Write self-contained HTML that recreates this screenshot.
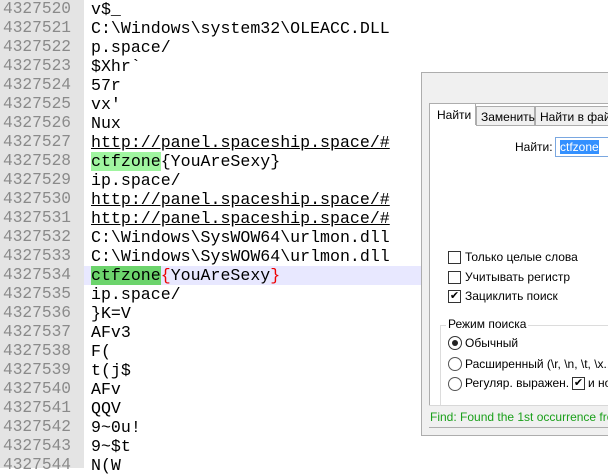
<!DOCTYPE html>
<html><head><meta charset="utf-8"><style>
*{margin:0;padding:0;box-sizing:border-box}
body{width:608px;height:468px;overflow:hidden;background:#fff;position:relative;font-family:"Liberation Mono",monospace}
#gut{position:absolute;left:0;top:0;width:84px;height:468px;background:#e4e4e4}
.r{position:absolute;left:0;height:19px;line-height:19px;font-size:16.6px;white-space:pre;width:608px}
.n{position:absolute;left:3px;color:#8a8a8a;font-size:16.2px}
.t{position:absolute;left:91px;color:#000}
.u{text-decoration:underline}
.g{background:#a0f5a0}
.gd{background:#6cd46c}
.red{color:#e00}
#dlg{position:absolute;left:421px;top:72px;width:200px;height:364px;background:#f0f0f0;border:1px solid #adadad;font-family:"Liberation Sans",sans-serif;font-size:12px;color:#000}
</style></head><body>
<div id="gut"></div>
<div class="r" style="top:266px;left:84px;background:#e8e8ff"></div>
<div class="r" style="top:0"><span class="n">4327520</span><span class="t">v$_</span></div>
<div class="r" style="top:19px"><span class="n">4327521</span><span class="t">C:\Windows\system32\OLEACC.DLL</span></div>
<div class="r" style="top:38px"><span class="n">4327522</span><span class="t">p.space/</span></div>
<div class="r" style="top:57px"><span class="n">4327523</span><span class="t">$Xhr`</span></div>
<div class="r" style="top:76px"><span class="n">4327524</span><span class="t">57r</span></div>
<div class="r" style="top:95px"><span class="n">4327525</span><span class="t">vx'</span></div>
<div class="r" style="top:114px"><span class="n">4327526</span><span class="t">Nux</span></div>
<div class="r" style="top:133px"><span class="n">4327527</span><span class="t u">http://panel.spaceship.space/#</span></div>
<div class="r" style="top:152px"><span class="n">4327528</span><span class="t"><span class="g">ctfzone</span>{YouAreSexy}</span></div>
<div class="r" style="top:171px"><span class="n">4327529</span><span class="t">ip.space/</span></div>
<div class="r" style="top:190px"><span class="n">4327530</span><span class="t u">http://panel.spaceship.space/#</span></div>
<div class="r" style="top:209px"><span class="n">4327531</span><span class="t u">http://panel.spaceship.space/#</span></div>
<div class="r" style="top:228px"><span class="n">4327532</span><span class="t">C:\Windows\SysWOW64\urlmon.dll</span></div>
<div class="r" style="top:247px"><span class="n">4327533</span><span class="t">C:\Windows\SysWOW64\urlmon.dll</span></div>
<div class="r" style="top:266px"><span class="n">4327534</span><span class="t"><span class="gd">ctfzone</span><span class="red">{</span>YouAreSexy<span class="red">}</span></span></div>
<div class="r" style="top:285px"><span class="n">4327535</span><span class="t">ip.space/</span></div>
<div class="r" style="top:304px"><span class="n">4327536</span><span class="t">}K=V</span></div>
<div class="r" style="top:323px"><span class="n">4327537</span><span class="t">AFv3</span></div>
<div class="r" style="top:342px"><span class="n">4327538</span><span class="t">F(</span></div>
<div class="r" style="top:361px"><span class="n">4327539</span><span class="t">t(j$</span></div>
<div class="r" style="top:380px"><span class="n">4327540</span><span class="t">AFv</span></div>
<div class="r" style="top:399px"><span class="n">4327541</span><span class="t">QQV</span></div>
<div class="r" style="top:418px"><span class="n">4327542</span><span class="t">9~0u!</span></div>
<div class="r" style="top:437px"><span class="n">4327543</span><span class="t">9~$t</span></div>
<div class="r" style="top:456px"><span class="n">4327544</span><span class="t">N(W</span></div>

<div id="dlg">
 <div style="position:absolute;left:7px;top:30px;width:200px;height:325px;background:#fff;border:1px solid #adadad"></div>
 <div style="position:absolute;left:7px;top:30px;width:47px;height:22px;background:#fff;border:1px solid #adadad;border-bottom:none;padding:4px 0 0 7px">Найти</div>
 <div style="position:absolute;left:54px;top:33px;width:59px;height:20px;background:#f0f0f0;border:1px solid #adadad;padding:3px 0 0 4px">Заменить</div>
 <div style="position:absolute;left:113px;top:33px;width:90px;height:20px;background:#f0f0f0;border:1px solid #adadad;padding:3px 0 0 4px;white-space:nowrap;overflow:hidden">Найти в файлах</div>
 <div style="position:absolute;left:93px;top:67px">Найти:</div>
 <div style="position:absolute;left:133px;top:64px;width:80px;height:20px;border:1px solid #7aa7e0;background:#fff;padding:2px 0 0 4px"><span style="background:#3390ff;color:#fff">ctfzone</span></div>
 <div style="position:absolute;left:26px;top:178px;width:13px;height:13px;border:1px solid #333;background:#fff"></div>
 <div style="position:absolute;left:43px;top:177px">Только целые слова</div>
 <div style="position:absolute;left:26px;top:198px;width:13px;height:13px;border:1px solid #333;background:#fff"></div>
 <div style="position:absolute;left:43px;top:197px">Учитывать регистр</div>
 <div style="position:absolute;left:26px;top:217px;width:13px;height:13px;border:1px solid #333;background:#fff;font-size:11px;line-height:11px;text-align:center">✔</div>
 <div style="position:absolute;left:43px;top:216px">Зациклить поиск</div>
 <div style="position:absolute;left:18px;top:252px;width:200px;height:101px;border:1px solid #dcdcdc"></div>
 <div style="position:absolute;left:24px;top:244px;background:#fff;padding:0 2px">Режим поиска</div>
 <div style="position:absolute;left:26px;top:263px;width:14px;height:14px;border:1px solid #333;border-radius:50%;background:#fff"><div style="position:absolute;left:3px;top:3px;width:6px;height:6px;border-radius:50%;background:#222"></div></div>
 <div style="position:absolute;left:43px;top:263px">Обычный</div>
 <div style="position:absolute;left:26px;top:284px;width:14px;height:14px;border:1px solid #555;border-radius:50%;background:#fff"></div>
 <div style="position:absolute;left:43px;top:284px;white-space:nowrap">Расширенный (\r, \n, \t, \x...</div>
 <div style="position:absolute;left:26px;top:304px;width:14px;height:14px;border:1px solid #555;border-radius:50%;background:#fff"></div>
 <div style="position:absolute;left:43px;top:303px;white-space:nowrap">Регуляр. выражен.</div>
 <div style="position:absolute;left:150px;top:304px;width:13px;height:13px;border:1px solid #333;background:#fff;font-size:11px;line-height:11px;text-align:center">✔</div>
 <div style="position:absolute;left:166px;top:303px;white-space:nowrap">и нов</div>
 <div style="position:absolute;left:7px;top:332px;width:200px;height:22px;background:#f0f0f0;border-top:1px solid #d8d8d8;color:#1aa01a;padding:4px 0 0 1px;white-space:nowrap">Find: Found the 1st occurrence from</div>
</div>
</body></html>
